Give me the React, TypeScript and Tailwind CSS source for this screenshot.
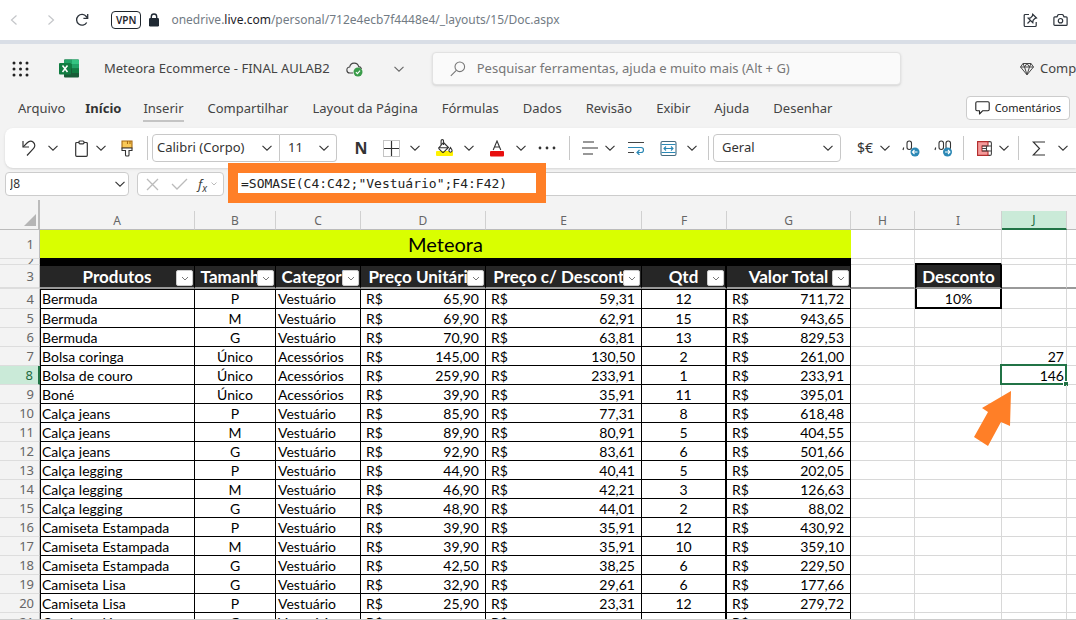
import type { ReactNode } from "react";

type Product = {
  row: number;
  name: string;
  size: string;
  category: string;
  price: string;
  discounted: string;
  qty: string;
  total: string;
};

const PRODUCTS: Product[] = [
  { row: 4, name: "Bermuda", size: "P", category: "Vestuário", price: "65,90", discounted: "59,31", qty: "12", total: "711,72" },
  { row: 5, name: "Bermuda", size: "M", category: "Vestuário", price: "69,90", discounted: "62,91", qty: "15", total: "943,65" },
  { row: 6, name: "Bermuda", size: "G", category: "Vestuário", price: "70,90", discounted: "63,81", qty: "13", total: "829,53" },
  { row: 7, name: "Bolsa coringa", size: "Único", category: "Acessórios", price: "145,00", discounted: "130,50", qty: "2", total: "261,00" },
  { row: 8, name: "Bolsa de couro", size: "Único", category: "Acessórios", price: "259,90", discounted: "233,91", qty: "1", total: "233,91" },
  { row: 9, name: "Boné", size: "Único", category: "Acessórios", price: "39,90", discounted: "35,91", qty: "11", total: "395,01" },
  { row: 10, name: "Calça jeans", size: "P", category: "Vestuário", price: "85,90", discounted: "77,31", qty: "8", total: "618,48" },
  { row: 11, name: "Calça jeans", size: "M", category: "Vestuário", price: "89,90", discounted: "80,91", qty: "5", total: "404,55" },
  { row: 12, name: "Calça jeans", size: "G", category: "Vestuário", price: "92,90", discounted: "83,61", qty: "6", total: "501,66" },
  { row: 13, name: "Calça legging", size: "P", category: "Vestuário", price: "44,90", discounted: "40,41", qty: "5", total: "202,05" },
  { row: 14, name: "Calça legging", size: "M", category: "Vestuário", price: "46,90", discounted: "42,21", qty: "3", total: "126,63" },
  { row: 15, name: "Calça legging", size: "G", category: "Vestuário", price: "48,90", discounted: "44,01", qty: "2", total: "88,02" },
  { row: 16, name: "Camiseta Estampada", size: "P", category: "Vestuário", price: "39,90", discounted: "35,91", qty: "12", total: "430,92" },
  { row: 17, name: "Camiseta Estampada", size: "M", category: "Vestuário", price: "39,90", discounted: "35,91", qty: "10", total: "359,10" },
  { row: 18, name: "Camiseta Estampada", size: "G", category: "Vestuário", price: "42,50", discounted: "38,25", qty: "6", total: "229,50" },
  { row: 19, name: "Camiseta Lisa", size: "G", category: "Vestuário", price: "32,90", discounted: "29,61", qty: "6", total: "177,66" },
  { row: 20, name: "Camiseta Lisa", size: "P", category: "Vestuário", price: "25,90", discounted: "23,31", qty: "12", total: "279,72" },
  { row: 21, name: "Camiseta Lisa", size: "G", category: "Vestuário", price: "", discounted: "", qty: "", total: "" },
];

const TABS = [
  "Arquivo",
  "Início",
  "Inserir",
  "Compartilhar",
  "Layout da Página",
  "Fórmulas",
  "Dados",
  "Revisão",
  "Exibir",
  "Ajuda",
  "Desenhar",
];

const COLUMNS = ["A", "B", "C", "D", "E", "F", "G", "H", "I", "J"];

const HEADINGS = ["Produtos", "Tamanho", "Categoria", "Preço Unitário", "Preço c/ Desconto", "Qtd", "Valor Total"];

const SELECTED_ROW = 8;

function tabClasses(tab: string): string {
  if (tab === "Início") return "-ml-1 -mr-0.5 font-bold text-[#333] border-transparent";
  if (tab === "Inserir") return "border-[#c4c4c4]";
  return "border-transparent";
}

function Chevron({ className = "" }: { className?: string }) {
  return (
    <svg className={className} width="10" height="6" viewBox="0 0 10 6" fill="none" stroke="currentColor" strokeWidth="1.1">
      <path d="M0.5 0.8 5 5.2 9.5 0.8" />
    </svg>
  );
}

function Divider({ className }: { className: string }) {
  return <span className={`h-6 w-px shrink-0 bg-[#c8c8c8] ${className}`} />;
}

function Tool({ label, className, children }: { label: string; className: string; children: ReactNode }) {
  return (
    <button aria-label={label} className={`flex h-7 w-6 shrink-0 items-center justify-center ${className}`}>
      {children}
    </button>
  );
}

function SplitTool({
  label,
  className,
  narrow = false,
  children,
}: {
  label: string;
  className: string;
  narrow?: boolean;
  children: ReactNode;
}) {
  return (
    <div className={`flex h-7 shrink-0 items-center ${className}`}>
      <button aria-label={label} className={`flex h-7 items-center justify-center ${narrow ? "w-5" : "w-7"}`}>
        {children}
      </button>
      <button aria-label={`${label}, mais opções`} className="flex h-7 w-5 items-center justify-center">
        <Chevron />
      </button>
    </div>
  );
}

function Dropdown({ label, value, className }: { label: string; value: string; className: string }) {
  return (
    <div className={`grid h-7 shrink-0 items-center border border-[#c8c8c8] bg-white ${className}`}>
      <select aria-label={label} defaultValue={value} className="col-start-1 row-start-1 h-full w-full appearance-none outline-none">
        <option>{value}</option>
      </select>
      <Chevron className="pointer-events-none col-start-1 row-start-1 mr-[7px] justify-self-end" />
    </div>
  );
}

function BrowserBar() {
  return (
    <div className="flex h-11 items-center border-b-4 border-[#d9dee6] bg-white text-[#2c333b]">
      <button aria-label="Voltar" className="ml-[10px] text-[#c4c6c9]">
        <svg width="8" height="12" viewBox="0 0 8 12" fill="none" stroke="currentColor" strokeWidth="1.2">
          <path d="M6.5 1.5 1.5 6l5 4.5" />
        </svg>
      </button>
      <button aria-label="Avançar" className="ml-[29px] text-[#c4c6c9]">
        <svg width="8" height="12" viewBox="0 0 8 12" fill="none" stroke="currentColor" strokeWidth="1.2">
          <path d="m1.5 1.5 5 4.5-5 4.5" />
        </svg>
      </button>
      <button aria-label="Recarregar" className="ml-[20px]">
        <svg width="14" height="14" viewBox="0 0 14 14" fill="none" stroke="currentColor" strokeWidth="1.3">
          <path d="M11.7 9.5A5.4 5.4 0 1 1 11.3 3.5L12.5 5" />
          <path d="M12.7 1v4.3H8.4" />
        </svg>
      </button>
      <span className="ml-[22px] rounded-[4px] border border-[#1f262d] px-1 text-[10px] font-semibold leading-4 text-[#1f262d]">VPN</span>
      <svg className="ml-2" width="10" height="14" viewBox="0 0 10 14" fill="#1f2933">
        <rect y="5" width="10" height="8.5" rx="1.2" />
        <path d="M2.3 5.5V3.7a2.7 2.7 0 0 1 5.4 0v1.8" fill="none" stroke="#1f2933" strokeWidth="1.4" />
      </svg>
      <p className="ml-3 text-[12px] text-[#727b84]">
        onedrive.<span className="text-[#1c2127]">live.com</span>/personal/712e4ecb7f4448e4/_layouts/15/Doc.aspx
      </p>
      <button aria-label="Fixar" className="ml-auto">
        <svg width="15" height="15" viewBox="0 0 15 15" fill="none" stroke="currentColor" strokeWidth="1.2">
          <path d="M6 1.5H2.2a1 1 0 0 0-1 1v10a1 1 0 0 0 1 1h10a1 1 0 0 0 1-1V9" />
          <path d="M9.7 1.3 13.5 5l-1.4.4-2 2-.3 2.3L5.2 5.2l2.3-.3 1.9-2zM7.3 7.6 4.5 10.5" />
        </svg>
      </button>
      <button aria-label="Captura de tela" className="ml-[15px] mr-[8px]">
        <svg width="15" height="14" viewBox="0 0 15 14" fill="none" stroke="currentColor" strokeWidth="1.2">
          <path d="M1.8 3.8H4L5 1.9a.8.8 0 0 1 .7-.4h3.6a.8.8 0 0 1 .7.4l1 1.9h2.2c.5 0 .9.4.9.9v6.700c0 .5-.4.9-.9.9H1.8a.9.9 0 0 1-.9-.9V4.700c0-.5.4-.9.9-.9Z" />
          <circle cx="7.5" cy="7.7" r="2.2" />
        </svg>
      </button>
    </div>
  );
}

function TitleBar() {
  return (
    <header className="flex h-12 items-center pt-px text-[#444]">
      <button aria-label="Inicializador de aplicativos" className="ml-3">
        <svg width="17" height="16" viewBox="0 0 17 16" fill="#222">
          {[2, 8, 14].map((y) =>
            [2, 8.5, 15].map((x) => <circle key={`${x}-${y}`} cx={x} cy={y} r="1.5" />),
          )}
        </svg>
      </button>
      <svg className="ml-[30px]" width="20" height="19" viewBox="0 0 20 19">
        <rect x="5" y="0.5" width="15" height="18" rx="1" fill="#185c37" />
        <path d="M5 1.5a1 1 0 0 1 1-1h7V5H5z" fill="#21a366" />
        <path d="M13 .5h6a1 1 0 0 1 1 1V5h-7z" fill="#33c481" />
        <path d="M13 5h7v4.5h-7z" fill="#21a366" />
        <path d="M5 5h8v4.5H5z" fill="#107c41" />
        <path d="M13 9.5h7V14h-7z" fill="#107c41" />
        <rect y="4" width="12" height="11.5" rx="1" fill="#107c41" />
        <path d="m3.5 6.5 5 6.5M8.5 6.5l-5 6.5" stroke="#fff" strokeWidth="1.5" />
      </svg>
      <h1 className="ml-[25px] whitespace-nowrap text-[13px]">Meteora Ecommerce - FINAL AULAB2</h1>
      <svg className="ml-4 shrink-0" width="18" height="16" viewBox="0 0 18 16" fill="none">
        <path d="M7 12H4a3 3 0 0 1-.3-6 4.600 4.600 0 0 1 9-.4A3 3 0 0 1 15.500 8" stroke="#444" strokeWidth="1.1" />
        <circle cx="12" cy="11" r="4.5" fill="#3a9c4a" />
        <path d="m9.900 11.100 1.500 1.500 2.700-2.900" stroke="#fff" strokeWidth="1.1" />
      </svg>
      <button aria-label="Detalhes do arquivo" className="ml-[30px] text-[#666]">
        <Chevron />
      </button>
      <label className="ml-7 flex h-[33px] w-[469px] items-center rounded border border-[#e2e2e2] bg-[#fafafa] text-[#777] shadow-sm">
        <svg className="ml-[17px] shrink-0" width="16" height="16" viewBox="0 0 16 16" fill="none" stroke="currentColor" strokeWidth="1.1">
          <circle cx="9.8" cy="5.8" r="4.8" />
          <path d="M6.3 9.3.8 14.8" />
        </svg>
        <input
          aria-label="Pesquisar"
          placeholder="Pesquisar ferramentas, ajuda e muito mais (Alt + G)"
          className="ml-[11px] min-w-0 flex-1 bg-transparent text-[13px] outline-none placeholder:text-[#777]"
        />
      </label>
      <button className="ml-auto flex w-14 shrink-0 items-center overflow-hidden text-[13px]">
        <svg className="shrink-0" width="14" height="14" viewBox="0 0 14 14" fill="none" stroke="currentColor" strokeWidth="1" strokeLinejoin="round">
          <path d="M3 1.5h8L13.500 5 7 12.800.5 5zM.5 5h13M4.500 5 7 12.800 9.500 5M3 1.500 4.500 5 7 1.500 9.500 5 11 1.500" />
        </svg>
        <span className="ml-[6px]">Comp</span>
      </button>
    </header>
  );
}

function Tabs() {
  return (
    <div className="flex h-8 items-center text-[13px] text-[#444]">
      <nav className="ml-[18px] flex items-center gap-6">
        {TABS.map((tab) => (
          <button key={tab} className={`whitespace-nowrap border-b-2 pt-0.5 leading-6 ${tabClasses(tab)}`}>
            {tab}
          </button>
        ))}
      </nav>
      <button className="ml-auto mr-[6px] flex h-6 items-center gap-[5px] rounded border border-[#ccc] bg-white px-2 text-[11px] text-[#222]">
        <svg width="15" height="14" viewBox="0 0 15 14" fill="none" stroke="currentColor" strokeWidth="1.1" strokeLinejoin="round">
          <path d="M2 .8h11c.7 0 1.200.5 1.200 1.200v6.500c0 .7-.5 1.200-1.200 1.200H7.800L4.500 13V9.700H2C1.300 9.700.8 9.200.8 8.500V2C.8 1.300 1.300.8 2 .8Z" />
        </svg>
        Comentários
      </button>
    </div>
  );
}

function Toolbar() {
  return (
    <div className="ml-[5px] mt-1 flex h-10 items-center overflow-hidden rounded-l-lg bg-white text-[13px] text-[#333] shadow">
      <SplitTool label="Desfazer" className="ml-[10px]">
        <svg width="16" height="18" viewBox="0 0 16 18" fill="none" stroke="currentColor" strokeWidth="1.2">
          <path d="M2 2v6h6" />
          <path d="M2.200 7.800 6 4c2-2 4.500-2.300 6.300-.7s2 4.200.3 6L6 16.500" />
        </svg>
      </SplitTool>
      <SplitTool label="Colar" className="ml-2" narrow>
        <svg width="13" height="17" viewBox="0 0 13 17" fill="none" stroke="currentColor" strokeWidth="1.2">
          <path d="M4 2.500H1.700a1 1 0 0 0-1 1v11.800a1 1 0 0 0 1 1h9.600a1 1 0 0 0 1-1V3.500a1 1 0 0 0-1-1H9" />
          <rect x="4" y="1" width="5" height="2.8" rx="1" />
        </svg>
      </SplitTool>
      <Tool label="Pincel de formatação" className="ml-1">
        <svg width="12" height="17" viewBox="0 0 12 17" strokeWidth="1.1">
          <path d="M1 1h10v7H1z" fill="#f9c957" stroke="#a86a12" />
          <path d="M6.500 1v3M9 1v3" stroke="#a86a12" />
          <path d="M1 8h10v2.500H8V15a1 1 0 0 1-1 1H5.500a1 1 0 0 1-1-1v-4.500H1z" fill="#fff" stroke="#333" />
        </svg>
      </Tool>
      <Divider className="ml-2" />
      <Dropdown label="Fonte" value="Calibri (Corpo)" className="ml-1 w-[128px] rounded-l pl-1" />
      <Dropdown label="Tamanho da fonte" value="11" className="w-[57px] rounded-r border-l-0 pl-2" />
      <Tool label="Negrito" className="ml-3">
        <span className="text-base font-bold">N</span>
      </Tool>
      <SplitTool label="Bordas" className="ml-1">
        <svg width="17" height="17" viewBox="0 0 17 17" fill="none" stroke="currentColor">
          <path d="M.5.5h16v16H.5z" strokeDasharray="1 1" stroke="#888" />
          <path d="M8.500 1v15M1 8.500h15" strokeWidth="1.2" />
        </svg>
      </SplitTool>
      <SplitTool label="Cor de preenchimento" className="ml-[6px]">
        <svg width="18" height="18" viewBox="0 0 18 18" fill="none" stroke="currentColor" strokeWidth="1.1">
          <rect y="12" width="17" height="5" rx="1" fill="#fff200" stroke="none" />
          <path d="m7.500 3.500 5 5-4.800 4.700a1 1 0 0 1-1.400 0L3 9.900a1 1 0 0 1 0-1.400zM3 8.800h9M7.500 6V1.800a1.200 1.200 0 0 0-2.400 0V6" />
          <path d="M14.500 8.500c1 1.500 1.600 2.300 1.600 3.100a1.600 1.600 0 0 1-3.200 0c0-.8.600-1.600 1.600-3.100Z" fill="#fff" />
        </svg>
      </SplitTool>
      <SplitTool label="Cor da fonte" className="ml-1">
        <svg width="16" height="17" viewBox="0 0 16 17" fill="none">
          <rect x="1" y="11" width="14" height="5.5" rx="1" fill="#e80f0f" />
          <path d="M4.200 10 8 1l3.800 9M5.500 7h5" stroke="currentColor" strokeWidth="1.1" />
        </svg>
      </SplitTool>
      <Tool label="Mais opções de fonte" className="ml-1">
        <svg width="18" height="4" viewBox="0 0 18 4" fill="currentColor">
          <circle cx="2" cy="2" r="1.4" />
          <circle cx="9" cy="2" r="1.4" />
          <circle cx="16" cy="2" r="1.4" />
        </svg>
      </Tool>
      <Divider className="ml-[10px]" />
      <SplitTool label="Alinhamento" className="ml-[10px]" narrow>
        <svg width="16" height="14" viewBox="0 0 16 14" stroke="currentColor" strokeWidth="1.2">
          <path d="M1 1h11M0 7h16M1 13h10" />
        </svg>
      </SplitTool>
      <Tool label="Quebrar texto" className="ml-1">
        <svg width="17" height="14" viewBox="0 0 17 14" fill="none" strokeWidth="1.2">
          <path d="M0 1.500h16M0 11.500h6" stroke="#444" />
          <path d="M0 6.500h13a2.500 2.500 0 0 1 0 5H9M11.500 9 9 11.500l2.500 2.500" stroke="#2b88b5" />
        </svg>
      </Tool>
      <SplitTool label="Mesclar" className="ml-[6px]">
        <svg width="17" height="17" viewBox="0 0 17 17" fill="none" stroke="#2b88b5" strokeWidth="1.1">
          <rect x="1" y="1.5" width="15" height="14" rx="1.5" stroke="#446b80" />
          <path d="M1.500 4.500h14M1.500 12.500h14M4 8.500h9M6 6.500l-2 2 2 2M11 6.500l2 2-2 2" />
        </svg>
      </SplitTool>
      <Divider className="ml-[6px]" />
      <Dropdown label="Formato de número" value="Geral" className="ml-1 w-[128px] rounded pl-2" />
      <SplitTool label="Formato de contabilização" className="ml-[14px]" narrow>
        <span className="text-sm">$€</span>
      </SplitTool>
      <Tool label="Diminuir casas decimais" className="ml-1">
        <svg width="18" height="17" viewBox="0 0 18 17" fill="none" stroke="currentColor" strokeWidth="1.1">
          <path d="M1.700 7.500 1 10" />
          <rect x="5" y="1" width="4.5" height="8.5" rx="2.2" />
          <circle cx="13" cy="12" r="4.5" fill="#2b88b5" stroke="none" />
          <path d="M15.500 12h-5M12.500 10l-2 2 2 2" stroke="#fff" />
        </svg>
      </Tool>
      <Tool label="Aumentar casas decimais" className="ml-2">
        <svg width="19" height="17" viewBox="0 0 19 17" fill="none" stroke="currentColor" strokeWidth="1.1">
          <path d="M1.700 7.500 1 10" />
          <rect x="5" y="1" width="4.5" height="8.5" rx="2.2" />
          <rect x="12" y="1" width="4.5" height="8.5" rx="2.2" />
          <circle cx="13.5" cy="12" r="4.5" fill="#2b88b5" stroke="none" />
          <path d="M11 12h5M14 10l2 2-2 2" stroke="#fff" />
        </svg>
      </Tool>
      <Divider className="ml-2" />
      <SplitTool label="Formatação condicional" className="ml-[10px]" narrow>
        <svg width="15" height="15" viewBox="0 0 15 15" strokeWidth="1.1">
          <rect x=".6" y=".6" width="13.8" height="13.8" rx="1.5" fill="#fff" stroke="#444" />
          <path d="M.6.6H11V5H5v5h6v4.400H.6z" fill="#f49a9a" stroke="#b42c2c" />
          <path d="M5 5h9.400M5 10h9.400M5 7.500h4.500M9.500 5v5" fill="none" stroke="#444" />
        </svg>
      </SplitTool>
      <Divider className="ml-1" />
      <SplitTool label="AutoSoma" className="ml-[6px]">
        <svg width="14" height="15" viewBox="0 0 14 15" fill="none" stroke="currentColor" strokeWidth="1.2">
          <path d="M13 1H1.200L7.500 7.500 1.200 14H13" />
        </svg>
      </SplitTool>
    </div>
  );
}

function FormulaBar() {
  return (
    <div className="ml-[5px] mt-1 flex h-6 text-[12px] text-[#333]">
      <div className="flex w-[124px] shrink-0 items-center rounded border border-[#ccc] bg-white">
        <input aria-label="Caixa de nome" defaultValue="J8" className="min-w-0 flex-1 pl-1 outline-none" />
        <button aria-label="Abrir caixa de nome" className="mr-[3px]">
          <Chevron />
        </button>
      </div>
      <div className="ml-2 flex w-[87px] shrink-0 items-center rounded border border-[#ccc] bg-white text-[#bbb]">
        <button aria-label="Cancelar" className="ml-2">
          <svg width="13" height="13" viewBox="0 0 13 13" stroke="currentColor" strokeWidth="1.3">
            <path d="m1 1 11 11M12 1 1 12" />
          </svg>
        </button>
        <button aria-label="Inserir" className="ml-3">
          <svg width="17" height="12" viewBox="0 0 17 12" fill="none" stroke="currentColor" strokeWidth="1.3">
            <path d="m1 6 5 5L16 1" />
          </svg>
        </button>
        <button aria-label="Inserir função" className="ml-[10px] flex items-center gap-1">
          <span className="text-[13px] italic leading-4 text-[#444]">
            f<sub className="text-[10px]">x</sub>
          </span>
          <svg width="6" height="4" viewBox="0 0 6 4" fill="none" stroke="currentColor">
            <path d="m.5.5 2.5 2.5L5.500.5" />
          </svg>
        </button>
      </div>
      <div className="relative ml-1 min-w-0 flex-1 border-y border-[#ccc] bg-white">
        <input
          aria-label="Barra de fórmulas"
          defaultValue={'=SOMASE(C4:C42;"Vestuário";F4:F42)'}
          className="block h-5 w-full pl-[13px] font-['DejaVu_Sans_Mono',monospace] text-[13px] text-[#222] outline-none"
        />
        <span className="pointer-events-none absolute -top-[10px] left-0 h-10 w-[318px] border-[10px] border-[#ff7f27]" />
      </div>
    </div>
  );
}

function RowHeader({ row, className = "" }: { row: number; className?: string }) {
  const tone = row === SELECTED_ROW ? "bg-[#caead8] text-[#1e6b41] border-r-2 border-r-[#217346]" : "bg-[#f3f3f3] text-[#666] border-r border-r-[#bbb]";
  return (
    <th scope="row" className={`border-b border-b-[#ddd] pr-[5px] pt-px text-right font-['Noto_Sans',sans-serif] text-[13px] font-normal ${tone} ${className}`}>
      {row}
    </th>
  );
}

function Money({ value, className }: { value: string; className: string }) {
  return (
    <td className={`border-b border-r border-black pl-[5px] pr-[6px] ${className}`}>
      <span className="flex justify-between">
        <span>R$</span>
        <span>{value}</span>
      </span>
    </td>
  );
}

function Selection() {
  return (
    <>
      <span className="pointer-events-none absolute -bottom-px -left-[2px] -right-px -top-[2px] border-2 border-[#217346]" />
      <span className="absolute -bottom-[2px] -right-[2px] size-[5px] border-l border-t border-white bg-[#217346]" />
      <svg className="absolute -left-7 top-[25px] z-10" width="38" height="55" viewBox="0 0 38 55" fill="#ff7f27">
        <path d="M37 0 8 17l6 4L0 46l14 9 13-24 9 4z" />
      </svg>
    </>
  );
}

function ProductRow({ product }: { product: Product }) {
  const first = product.row === 4;
  const top = first ? "border-t" : "pt-px";
  const cell = `border-b border-r border-black ${top}`;
  const empty = "border-b border-r border-[#d8d8d8]";
  return (
    <tr className={first ? "h-5 leading-[18px]" : "h-[19px] leading-[17px]"}>
      <RowHeader row={product.row} />
      <td className={`pl-px ${cell} border-l`}>{product.name}</td>
      <td className={`text-center ${cell}`}>{product.size}</td>
      <td className={`pl-[2px] ${cell}`}>{product.category}</td>
      <Money value={product.price} className={top} />
      <Money value={product.discounted} className={top} />
      <td className={`text-center ${cell} border-r-2`}>{product.qty}</td>
      <Money value={product.total} className={top} />
      <td className={empty} />
      {first ? <td className="border-2 border-t-0 border-black pt-px text-center leading-[17px]">10%</td> : <td className={empty} />}
      <td className={`relative pr-[2px] pt-px text-right ${empty}`}>
        {product.row === 7 && "27"}
        {product.row === SELECTED_ROW && (
          <>
            146
            <Selection />
          </>
        )}
      </td>
      <td className="border-b border-[#d8d8d8]" />
    </tr>
  );
}

function Sheet() {
  const blank = "border-b border-r border-[#d8d8d8]";
  return (
    <div className="mt-1">
      <div className="h-[11px] w-10 border-r-2 border-[#bbb]" />
      <table className="w-full table-fixed border-separate border-spacing-0 bg-white font-['Lato',sans-serif] text-[14px] text-black">
        <colgroup>
          <col className="w-10" />
          <col className="w-[155px]" />
          <col className="w-[81px]" />
          <col className="w-[85px]" />
          <col className="w-[125px]" />
          <col className="w-[156px]" />
          <col className="w-[85px]" />
          <col className="w-[124px]" />
          <col className="w-[64px]" />
          <col className="w-[87px]" />
          <col className="w-[65px]" />
          <col />
        </colgroup>
        <thead className="bg-[#f3f3f3] font-['Noto_Sans',sans-serif] text-[12px] leading-[17px] text-[#666]">
          <tr>
            <td className="border-b border-r-2 border-[#bbb]">
              <svg className="ml-auto mr-[2px]" width="12" height="12" viewBox="0 0 12 12" fill="#b5b5b5">
                <path d="M12 0v12H0z" />
              </svg>
            </td>
            {COLUMNS.map((column) => (
              <th
                key={column}
                scope="col"
                className={`border-r border-r-[#d0d0d0] font-normal ${
                  column === "J" ? "border-b-2 border-b-[#217346] bg-[#caead8] text-[#1e6b41]" : "border-b border-b-[#bbb] pt-px"
                }`}
              >
                {column}
              </th>
            ))}
            <td className="border-b border-b-[#bbb]" />
          </tr>
        </thead>
        <tbody>
          <tr className="h-[29px]">
            <RowHeader row={1} />
            <td colSpan={7} className="border-b border-black bg-[#d9ff00] pt-px text-center text-[20px] leading-[27px]">
              Meteora
            </td>
            <td className={blank} />
            <td className={blank} />
            <td className={blank} />
            <td className="border-b border-[#d8d8d8]" />
          </tr>
          <tr className="h-[6px]">
            <th scope="row" className="border-b border-r border-b-[#ddd] border-r-[#bbb] bg-[#f3f3f3] pr-[5px] text-right font-['Noto_Sans',sans-serif] text-[13px] font-normal text-[#666]">
              <span className="block h-[5px] overflow-hidden leading-[5px]">2</span>
            </th>
            <td colSpan={7} className="bg-black" />
            <td className={blank} />
            <td className="border-b-2 border-r border-b-black border-r-[#d8d8d8]" />
            <td className={blank} />
            <td className="border-b border-[#d8d8d8]" />
          </tr>
          <tr className="h-6 text-[17px] leading-[21px] text-white">
            <RowHeader row={3} className="border-b-2 border-b-[#999]" />
            {HEADINGS.map((heading) => (
              <th
                key={heading}
                scope="col"
                className={`relative overflow-hidden whitespace-nowrap border-b-2 border-t border-b-[#999] border-r-black border-t-black bg-[#262626] p-0 ${
                  heading === "Qtd" ? "border-r-2" : "border-r"
                }`}
              >
                <span className="flex justify-center">{heading}</span>
                <button
                  aria-label={`Filtrar ${heading}`}
                  className="absolute bottom-px right-px flex h-4 w-[17px] items-center justify-center rounded-[2px] border border-[#ccc] bg-white text-[#777]"
                >
                  <svg width="8" height="5" viewBox="0 0 8 5" fill="none" stroke="currentColor">
                    <path d="m1 1 3 3 3-3" />
                  </svg>
                </button>
              </th>
            ))}
            <td className="border-b-2 border-r border-b-[#999] border-r-[#d8d8d8]" />
            <th scope="col" className="border-x-2 border-b-2 border-b-[#999] border-x-black bg-[#262626] p-0">
              Desconto
            </th>
            <td className="border-b-2 border-r border-b-[#999] border-r-[#d8d8d8]" />
            <td className="border-b-2 border-b-[#999]" />
          </tr>
          {PRODUCTS.map((product) => (
            <ProductRow key={product.row} product={product} />
          ))}
        </tbody>
      </table>
    </div>
  );
}

export default function App() {
  return (
    <main className="h-screen overflow-hidden border-b border-[#ccc] bg-[#f3f3f3] font-['Noto_Sans',sans-serif]">
      <BrowserBar />
      <TitleBar />
      <Tabs />
      <Toolbar />
      <FormulaBar />
      <Sheet />
    </main>
  );
}
